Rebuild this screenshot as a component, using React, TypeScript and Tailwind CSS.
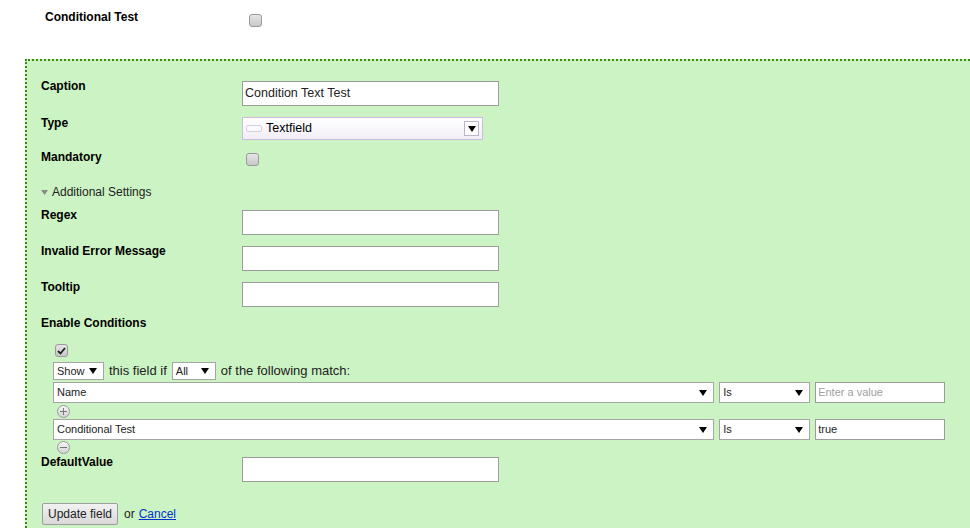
import type { ReactNode } from "react";

const font = "font-['Liberation_Sans',Arial,sans-serif]";

function Arrow() {
  return (
    <svg width="8" height="6" viewBox="0 0 8 6" className="shrink-0">
      <path d="M0 0 H8 L4 6 Z" fill="#000" />
    </svg>
  );
}

function Checkbox({ checked = false }: { checked?: boolean }) {
  return (
    <div className="w-[13px] h-[13px] rounded-[3px] border border-[#9a9a9a] bg-gradient-to-b from-[#e6e6e6] to-[#c8c8c8] flex items-center justify-center">
      {checked && (
        <svg width="9" height="8" viewBox="0 0 9 8">
          <path d="M1 4 L3.5 6.5 L8 1" stroke="#222" strokeWidth="1.8" fill="none" />
        </svg>
      )}
    </div>
  );
}

function RoundButton({ sign }: { sign: "+" | "-" }) {
  return (
    <div className="w-[13px] h-[13px] rounded-full border border-[#9a9a9a] bg-gradient-to-b from-[#f6f6f6] to-[#d4d4d4] flex items-center justify-center">
      <svg width="7" height="7" viewBox="0 0 7 7">
        <path d="M0 3.5 H7" stroke="#777" strokeWidth="1" />
        {sign === "+" && <path d="M3.5 0 V7" stroke="#777" strokeWidth="1" />}
      </svg>
    </div>
  );
}

function TextInput({ value = "", className = "" }: { value?: string; className?: string }) {
  return (
    <div
      className={`w-[257px] h-[25px] border border-[#9c9c9c] bg-white px-[2px] flex items-center text-[12.5px] text-[#222] ${className}`}
    >
      {value}
    </div>
  );
}

function PlainSelect({ value, width }: { value: string; width: string }) {
  return (
    <div
      className={`${width} h-full border border-[#a5a5a5] bg-white flex items-center justify-between pl-[3px] pr-[6px] text-[11px] text-[#222]`}
    >
      <span>{value}</span>
      <Arrow />
    </div>
  );
}

function Row({ label, children, className = "" }: { label: string; children?: ReactNode; className?: string }) {
  return (
    <div className={`grid grid-cols-[201px_1fr] items-start ${className}`}>
      <div className="text-[12px] leading-[14px] font-bold text-black">{label}</div>
      <div>{children}</div>
    </div>
  );
}

function ConditionRow({ field, value, placeholder }: { field: string; value?: string; placeholder?: string }) {
  return (
    <div className="flex h-[21px] w-[892px]">
      <PlainSelect value={field} width="w-[662px]" />
      <div className="ml-[5px]">
        <PlainSelect value="Is" width="w-[91px]" />
      </div>
      <div className="ml-[5px] w-[130px] h-full border border-[#9c9c9c] bg-white flex items-center px-[2px] text-[11px]">
        {value ? <span className="text-[#222]">{value}</span> : <span className="text-[#a0a0a0]">{placeholder}</span>}
      </div>
    </div>
  );
}

export default function App() {
  return (
    <div className={`w-[970px] h-[528px] overflow-hidden bg-white ${font}`}>
      {/* Header */}
      <div className="pt-[10px] pl-[45px] grid grid-cols-[204px_1fr] items-start">
        <div className="text-[12px] leading-[14px] font-bold text-black">Conditional Test</div>
        <div className="mt-[4px]">
          <Checkbox />
        </div>
      </div>

      {/* Edit panel */}
      <div className="mt-[32px] ml-[25px] h-[600px] border-t-2 border-l-2 border-dotted border-[#3d8a0a] bg-[#ccf3c3] pt-[18px] pl-[14px]">
        <Row label="Caption">
          <TextInput value="Condition Text Test" className="mt-[2px]" />
        </Row>

        <Row label="Type" className="mt-[10px]">
          <div className="mt-[1px] w-[241px] h-[23px] border border-[#cbbcdc] bg-gradient-to-b from-white to-[#f1eef6] flex items-center pl-[3px] pr-[3px]">
            <div className="w-[16px] h-[7px] rounded-[2px] border border-[#d6cfe0] bg-[#fbfbff]" />
            <span className="ml-[4px] text-[12.5px] text-black">Textfield</span>
            <div className="ml-auto w-[15px] h-[15px] border border-[#bdb4c8] bg-white flex items-center justify-center">
              <Arrow />
            </div>
          </div>
        </Row>

        <Row label="Mandatory" className="mt-[10px]">
          <div className="mt-[3px] ml-[4px]">
            <Checkbox />
          </div>
        </Row>

        <div className="mt-[19px] flex items-center text-[12px] leading-[14px] text-[#222]">
          <svg width="7" height="5" viewBox="0 0 7 5" className="mr-[4px]">
            <path d="M0 0 H7 L3.5 5 Z" fill="#8a8a8a" />
          </svg>
          Additional Settings
        </div>

        <Row label="Regex" className="mt-[9px]">
          <TextInput className="mt-[2px]" />
        </Row>
        <Row label="Invalid Error Message" className="mt-[9px]">
          <TextInput className="mt-[2px]" />
        </Row>
        <Row label="Tooltip" className="mt-[9px]">
          <TextInput className="mt-[2px]" />
        </Row>
        <Row label="Enable Conditions" className="mt-[9px]" />

        {/* Conditions */}
        <div className="ml-[12px]">
          <div className="mt-[14px] ml-[2px]">
            <Checkbox checked />
          </div>
          <div className="mt-[5px] flex items-center h-[18px] text-[13px] text-[#222]">
            <PlainSelect value="Show" width="w-[51px]" />
            <span className="mx-[5px]">this field if</span>
            <PlainSelect value="All" width="w-[44px]" />
            <span className="ml-[5px]">of the following match:</span>
          </div>
          <div className="mt-[2px]">
            <ConditionRow field="Name" placeholder="Enter a value" />
          </div>
          <div className="mt-[2px] ml-[4px]">
            <RoundButton sign="+" />
          </div>
          <div className="mt-[1px]">
            <ConditionRow field="Conditional Test" value="true" />
          </div>
          <div className="mt-[1px] ml-[4px]">
            <RoundButton sign="-" />
          </div>
        </div>

        <Row label="DefaultValue" className="mt-[1px]">
          <TextInput className="mt-[2px]" />
        </Row>

        <div className="mt-[21px] ml-[1px] flex items-center text-[12px]">
          <button className="w-[76px] h-[22px] rounded-[2px] border border-[#9e9e9e] bg-gradient-to-b from-[#f2f2f2] to-[#d9d9d9] text-[12px] text-[#222]">
            Update field
          </button>
          <span className="ml-[6px] text-[#222]">or</span>
          <a href="#" className="ml-[4px] text-[#0033cc] underline">
            Cancel
          </a>
        </div>
      </div>
    </div>
  );
}
